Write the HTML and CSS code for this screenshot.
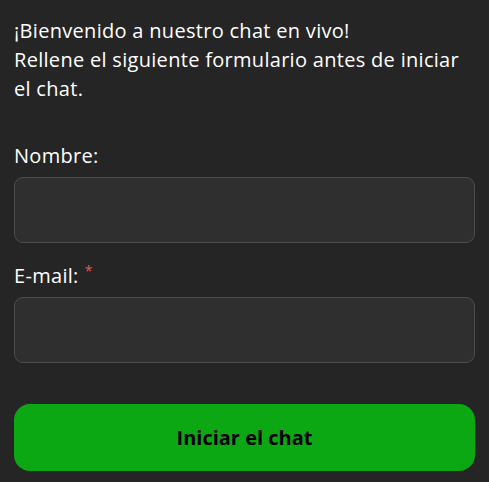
FILE: index.html
```html
<!DOCTYPE html>
<html lang="es">
<head>
<meta charset="utf-8">
<link rel="stylesheet" href="styles.css">
</head>
<body>
<form class="chat-form">
  <p class="intro">¡Bienvenido a nuestro chat en vivo!<br>Rellene el siguiente formulario antes de iniciar el chat.</p>
  <div class="field">
    <label class="label" for="name">Nombre:</label>
    <input class="input" id="name" type="text">
  </div>
  <div class="field">
    <label class="label" for="email">E-mail:<span class="req">*</span></label>
    <input class="input" id="email" type="email">
  </div>
  <button class="submit" type="button">Iniciar el chat</button>
</form>
</body>
</html>
```
FILE: styles.css
```css
html, body {
  margin: 0;
  padding: 0;
  background: #252525;
  height: 100%;
}
body {
  font-family: "Open Sans", "Noto Sans", sans-serif;
  font-size: 20px;
  line-height: 29px;
  letter-spacing: 0.3px;
  color: #ffffff;
}
.chat-form {
  padding: 16px 14px;
  display: flex;
  flex-direction: column;
}
.intro {
  margin: 0 0 38px 0;
}
.field {
  display: flex;
  flex-direction: column;
  margin-bottom: 18px;
}
.label {
  display: block;
  margin-bottom: 7px;
}
.req {
  color: #e25a50;
  font-size: 14px;
  vertical-align: top;
  line-height: 20px;
  margin-left: 6px;
}
.input {
  box-sizing: border-box;
  height: 66px;
  width: 100%;
  background: #2f2f2f;
  border: 1px solid #4c4c4c;
  border-radius: 9px;
  margin: 0;
}
.field + .submit {
  margin-top: 23px;
}
.submit {
  box-sizing: border-box;
  height: 67px;
  width: 100%;
  border: none;
  border-radius: 16px;
  background: #0ca814;
  color: #000000;
  font-family: "Open Sans", "Noto Sans", sans-serif;
  font-size: 20px;
  font-weight: 700;
  letter-spacing: 0;
}
```
